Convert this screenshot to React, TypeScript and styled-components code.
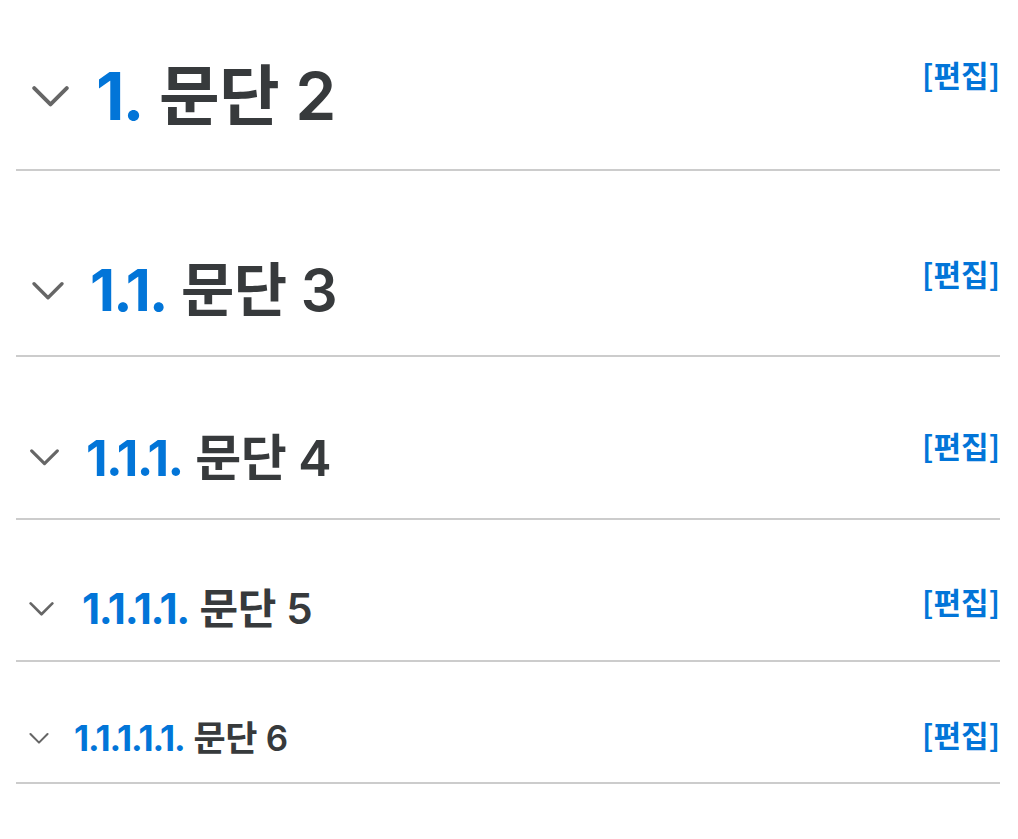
import styled, { createGlobalStyle } from "styled-components";

const GlobalStyle = createGlobalStyle`
  html, body {
    margin: 0;
    padding: 0;
    background: #fff;
  }

  body {
    font-family: Inter, "Noto Sans CJK KR", "Noto Sans", sans-serif;
    color: #373a3c;
  }
`;

type LevelStyle = {
  fontSize: number;
  marginTop: number;
  paddingBottom: number;
  chevronWidth: number;
  chevronLeft: number;
  chevronGap: number;
};

// one entry per heading depth, h2 .. h6
const levels: LevelStyle[] = [
  { fontSize: 66, marginTop: 57, paddingBottom: 33, chevronWidth: 37, chevronLeft: 16, chevronGap: 27 },
  { fontSize: 58, marginTop: 85, paddingBottom: 29, chevronWidth: 32, chevronLeft: 16, chevronGap: 26 },
  { fontSize: 50, marginTop: 71, paddingBottom: 30, chevronWidth: 29, chevronLeft: 14, chevronGap: 27 },
  { fontSize: 42, marginTop: 64, paddingBottom: 26, chevronWidth: 25, chevronLeft: 13, chevronGap: 28 },
  { fontSize: 35, marginTop: 55, paddingBottom: 23, chevronWidth: 20, chevronLeft: 13, chevronGap: 25 },
];

const Page = styled.div`
  padding: 0 18px 0 16px;
`;

const Section = styled.div<{ $level: number }>`
  display: flex;
  align-items: flex-start;
  justify-content: space-between;
  margin-top: ${(p) => levels[p.$level].marginTop}px;
  padding-bottom: ${(p) => levels[p.$level].paddingBottom}px;
  border-bottom: 2px solid #ccc;
`;

const Title = styled.h2<{ $level: number }>`
  display: flex;
  align-items: center;
  margin: 0;
  font-size: ${(p) => levels[p.$level].fontSize}px;
  line-height: 1.2;
  font-weight: 600;
  letter-spacing: -0.01em;
  color: #373a3c;
  white-space: nowrap;
`;

const Chevron = styled.svg<{ $level: number }>`
  flex: none;
  width: ${(p) => levels[p.$level].chevronWidth}px;
  height: ${(p) => Math.round((levels[p.$level].chevronWidth * 8) / 14)}px;
  margin-left: ${(p) => levels[p.$level].chevronLeft}px;
  margin-right: ${(p) => levels[p.$level].chevronGap}px;
`;

const Number = styled.span`
  color: #0275d8;
  font-weight: 700;
  letter-spacing: -0.03em;
  margin-right: 0.25em;
`;

const EditLink = styled.a`
  flex: none;
  font-family: "Noto Sans CJK KR", sans-serif;
  font-size: 30px;
  line-height: 1.15;
  font-weight: 700;
  color: #0275d8;
  text-decoration: none;
  cursor: pointer;
`;

const headings = [
  { num: "1.", text: "문단 2" },
  { num: "1.1.", text: "문단 3" },
  { num: "1.1.1.", text: "문단 4" },
  { num: "1.1.1.1.", text: "문단 5" },
  { num: "1.1.1.1.1.", text: "문단 6" },
];

export default function App() {
  return (
    <>
      <GlobalStyle />
      <Page>
        {headings.map((h, i) => (
          <Section key={h.num} $level={i}>
            <Title $level={i}>
              <Chevron $level={i} viewBox="0 0 14 8" fill="none">
                <polyline
                  points="0.8,0.8 7,7 13.2,0.8"
                  stroke="#666"
                  strokeWidth="1.5"
                  strokeLinecap="round"
                  strokeLinejoin="round"
                />
              </Chevron>
              <Number>{h.num}</Number>
              {h.text}
            </Title>
            <EditLink>[편집]</EditLink>
          </Section>
        ))}
      </Page>
    </>
  );
}
